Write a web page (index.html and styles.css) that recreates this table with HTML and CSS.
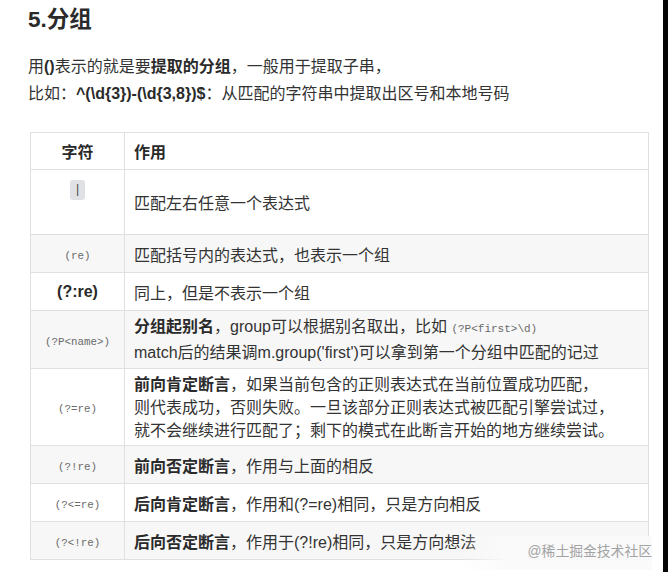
FILE: index.html
```html
<!DOCTYPE html>
<html lang="zh-CN">
<head>
<meta charset="utf-8">
<title>5.分组</title>
<link rel="stylesheet" href="styles.css">
</head>
<body>
<div class="page">
  <div class="content">
    <h2 class="title">5.分组</h2>
    <p class="intro">用<b>()</b>表示的就是要<b>提取的分组</b>，一般用于提取子串，<br>比如：<b>^(\d{3})-(\d{3,8})$</b>：从匹配的字符串中提取出区号和本地号码</p>
    <div class="table-wrap">
      <table class="regex">
        <colgroup><col class="col1"><col class="col2"></colgroup>
        <thead>
          <tr class="row-head"><th class="c1">字符</th><th class="c2">作用</th></tr>
        </thead>
        <tbody>
          <tr class="row-pipe"><td class="c1 top"><span class="pill">|</span></td><td class="c2">匹配左右任意一个表达式</td></tr>
          <tr class="row-one alt"><td class="c1"><code>(re)</code></td><td class="c2">匹配括号内的表达式，也表示一个组</td></tr>
          <tr class="row-one"><td class="c1"><b class="bold-code">(?:re)</b></td><td class="c2">同上，但是不表示一个组</td></tr>
          <tr class="row-two alt"><td class="c1"><code>(?P&lt;name&gt;)</code></td><td class="c2 lh24"><b>分组起别名</b>，group可以根据别名取出，比如 <code class="inline">(?P&lt;first&gt;\d)</code><br>match后的结果调m.group('first')可以拿到第一个分组中匹配的记过</td></tr>
          <tr class="row-three"><td class="c1"><code>(?=re)</code></td><td class="c2 lh23"><b>前向肯定断言</b>，如果当前包含的正则表达式在当前位置成功匹配，<br>则代表成功，否则失败。一旦该部分正则表达式被匹配引擎尝试过，<br>就不会继续进行匹配了；剩下的模式在此断言开始的地方继续尝试。</td></tr>
          <tr class="row-one alt"><td class="c1"><code>(?!re)</code></td><td class="c2"><b>前向否定断言</b>，作用与上面的相反</td></tr>
          <tr class="row-one"><td class="c1"><code>(?&lt;=re)</code></td><td class="c2"><b>后向肯定断言</b>，作用和(?=re)相同，只是方向相反</td></tr>
          <tr class="row-one alt"><td class="c1"><code>(?&lt;!re)</code></td><td class="c2"><b>后向否定断言</b>，作用于(?!re)相同，只是方向想法</td></tr>
        </tbody>
      </table>
      <div class="watermark">@稀土掘金技术社区</div>
    </div>
  </div>
  <div class="edge"></div>
</div>
</body>
</html>
```
FILE: styles.css
```css
html, body {
  margin: 0;
  padding: 0;
  background: #ffffff;
}
body {
  font-family: "Liberation Sans", "Noto Sans CJK SC", sans-serif;
  color: #333333;
  width: 668px;
  height: 572px;
  overflow: hidden;
}
.page {
  display: flex;
  height: 572px;
}
.content {
  flex: 1;
  padding-left: 28px;
}
.edge {
  width: 5px;
  background: #050505;
}
.title {
  margin: 0;
  padding-top: 5px;
  font-size: 22.5px;
  line-height: 30px;
  font-weight: bold;
  color: #2a2a2a;
}
.intro {
  margin: 18px 0 0 0;
  font-size: 16px;
  line-height: 27px;
  color: #333;
}
.intro b {
  color: #2a2a2a;
}
.table-wrap {
  position: relative;
  margin-top: 25px;
  margin-left: 2px;
  width: 619px;
}
.regex {
  border-collapse: collapse;
  table-layout: fixed;
  width: 619px;
  font-size: 16px;
  color: #333;
}
.col1 { width: 94px; }
.regex th, .regex td {
  border: 1px solid #e0e0e0;
  padding: 0 9px;
  vertical-align: middle;
  white-space: nowrap;
}
.regex th {
  font-weight: bold;
  text-align: left;
  color: #2a2a2a;
}
.regex .c1 {
  text-align: center;
  padding: 0;
}
.regex b {
  color: #2a2a2a;
}
.row-head { height: 37px; }
.row-pipe { height: 65px; }
.row-one { height: 38px; }
.row-two { height: 58px; }
.row-three { height: 77px; }
.alt td { background: #f7f7f7; }
.regex td.top {
  vertical-align: top;
  padding-top: 9px;
}
.pill {
  display: inline-block;
  width: 15px;
  height: 20px;
  line-height: 20px;
  border-radius: 3px;
  background: #dfe1e5;
  font-family: "Liberation Mono", monospace;
  font-size: 12px;
  color: #444;
}
code {
  font-family: "Liberation Mono", "DejaVu Sans Mono", monospace;
  font-size: 10.8px;
  color: #6a6a6a;
}
code.inline {
  font-size: 11px;
}
.bold-code {
  font-size: 16px;
}
.lh24 { line-height: 24px; }
.lh23 { line-height: 23px; }
.watermark {
  position: absolute;
  right: -3px;
  bottom: -10px;
  width: 190px;
  height: 34px;
  text-align: right;
  line-height: 32px;
  font-size: 13.8px;
  color: #a3a3a3;
  background: linear-gradient(to right, rgba(255,255,255,0), rgba(250,250,250,0.92) 22%);
}
```
